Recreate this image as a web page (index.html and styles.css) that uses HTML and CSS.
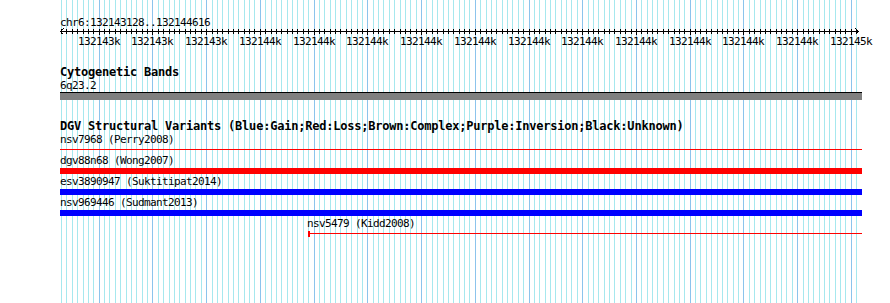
FILE: index.html
```html
<!DOCTYPE html>
<html>
<head>
<meta charset="utf-8">
<title>chr6:132143128..132144616</title>
<link rel="stylesheet" href="styles.css">
</head>
<body>
<div class="panel">
	<svg class="grid" id="grid" width="890" height="303"></svg>

	<!-- ruler -->
	<div class="ruler">
		<div class="label">chr6:132143128..132144616</div>
		<svg class="scale" id="scale" width="890" height="20">
			<line class="axis" x1="60" y1="2.5" x2="859" y2="2.5"/>
			<polyline class="axis" points="63.5,-0.5 60.5,2.5 63.5,5.5"/>
			<polyline class="axis" points="855.5,-0.5 858.5,2.5 855.5,5.5"/>
			<text x="78" y="16">132143k</text>
			<text x="131" y="16">132143k</text>
			<text x="185" y="16">132143k</text>
			<text x="239" y="16">132144k</text>
			<text x="293" y="16">132144k</text>
			<text x="346" y="16">132144k</text>
			<text x="400" y="16">132144k</text>
			<text x="454" y="16">132144k</text>
			<text x="508" y="16">132144k</text>
			<text x="561" y="16">132144k</text>
			<text x="615" y="16">132144k</text>
			<text x="669" y="16">132144k</text>
			<text x="722" y="16">132144k</text>
			<text x="776" y="16">132144k</text>
			<text x="830" y="16">132145k</text>
		</svg>
	</div>

	<!-- cytogenetic bands -->
	<div class="track cyto">
		<div class="title">Cytogenetic Bands</div>
		<div class="label">6q23.2</div>
		<div class="band"></div>
	</div>

	<!-- DGV -->
	<div class="track dgv">
		<div class="title">DGV Structural Variants (Blue:Gain;Red:Loss;Brown:Complex;Purple:Inversion;Black:Unknown)</div>
		<div class="feature">
			<div class="label">nsv7968 (Perry2008)</div>
			<div class="glyph"><div class="line loss"></div></div>
		</div>
		<div class="feature">
			<div class="label">dgv88n68 (Wong2007)</div>
			<div class="glyph"><div class="bar loss"></div></div>
		</div>
		<div class="feature">
			<div class="label">esv3890947 (Suktitipat2014)</div>
			<div class="glyph"><div class="bar gain"></div></div>
		</div>
		<div class="feature">
			<div class="label">nsv969446 (Sudmant2013)</div>
			<div class="glyph"><div class="bar gain" style="width:801px"></div></div>
		</div>
		<div class="feature" style="margin-left:247px">
			<div class="label">nsv5479 (Kidd2008)</div>
			<div class="glyph"><div class="cap loss"></div><div class="line loss"></div></div>
		</div>
	</div>
</div>
<script src="script.js"></script>
</body>
</html>
```

FILE: styles.css
```css
body {
	margin:0;
	background-color:#ffffff;
}

div.panel {
	position:relative;
	width:890px;
	height:303px;
	overflow:hidden;
	box-sizing:border-box;
	padding-top:16px;
	font-family:"DejaVu Sans Mono", "Liberation Mono", monospace;
	font-size:11px;
	letter-spacing:-0.62px;
	line-height:13px;
	color:#000000;
}

svg.grid {
	position:absolute;
	left:0;
	top:0;
}
svg.grid line {
	stroke-width:1;
	shape-rendering:crispEdges;
}
svg.grid line.minor {
	stroke:#a6e8ee;
}
svg.grid line.major {
	stroke:#8cc4ec;
}

div.ruler {
	position:relative;
}
div.ruler div.label {
	padding-left:60px;
	white-space:nowrap;
}
svg.scale {
	display:block;
	overflow:visible;
}
svg.scale .axis,
svg.scale line.tick {
	stroke:#000000;
	stroke-width:1;
	fill:none;
	shape-rendering:crispEdges;
}
svg.scale text {
	font-family:"DejaVu Sans Mono", "Liberation Mono", monospace;
	font-size:11px;
	letter-spacing:-0.62px;
	fill:#000000;
}

div.track {
	position:relative;
	margin-left:60px;
	width:802px;
}
div.track div.title {
	font-weight:bold;
	font-size:12px;
	letter-spacing:-0.22px;
	white-space:nowrap;
}
div.track div.label {
	white-space:nowrap;
}

div.cyto {
	margin-top:17px;
}
div.band {
	height:7px;
	border-top:1px solid #000000;
	background-color:#808080;
}

div.dgv {
	margin-top:20px;
}
div.feature {
	height:21px;
}
div.glyph {
	display:flex;
	align-items:flex-start;
	height:6px;
	margin-top:1px;
}
div.bar {
	flex:1;
	height:6px;
}
div.line {
	flex:1;
	height:1px;
	margin-top:2px;
}
div.cap {
	width:2px;
	height:6px;
	margin-left:1px;
}
.loss {
	background-color:#ff0000;
}
.gain {
	background-color:#0000ff;
}
```

FILE: script.js
```js
// grid lines and ruler ticks, one every 10 bp
var START = 132143128;
var STOP = 132144616;
var LEFT = 60;
var WIDTH = 800;
var SVGNS = 'http://www.w3.org/2000/svg';

function toPixel(pos) {
	return Math.round(LEFT + (pos - START) * WIDTH / (STOP - START + 1));
}

function addLine(svg, x1, y1, x2, y2, cls) {
	var l = document.createElementNS(SVGNS, 'line');
	l.setAttribute('x1', x1);
	l.setAttribute('y1', y1);
	l.setAttribute('x2', x2);
	l.setAttribute('y2', y2);
	l.setAttribute('class', cls);
	svg.appendChild(l);
}

var grid = document.getElementById('grid');
var scale = document.getElementById('scale');

for (var pos = Math.ceil(START / 10) * 10; pos <= STOP; pos += 10) {
	var x = toPixel(pos) + 0.5;
	var major = (pos % 100 == 0);
	addLine(grid, x, 0, x, 303, major ? 'major' : 'minor');
	addLine(scale, x, 0, x, major ? 6 : 5, 'tick');
}
```
